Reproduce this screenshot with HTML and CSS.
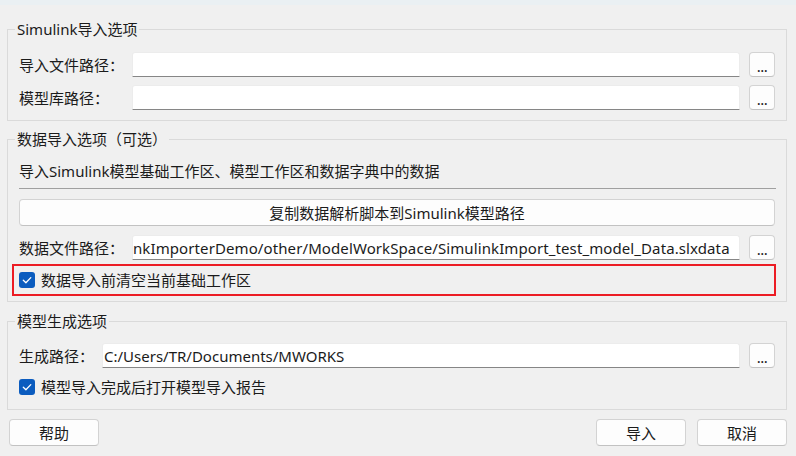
FILE: index.html
```html
<!DOCTYPE html>
<html lang="zh">
<head>
<meta charset="utf-8">
<title>Simulink导入</title>
<link rel="stylesheet" href="styles.css">
</head>
<body>
<div class="topbar"></div>
<div class="main">
  <fieldset class="group g1">
    <legend>Simulink导入选项</legend>
    <div class="row">
      <span class="label lw1">导入文件路径：</span>
      <div class="input"></div>
      <button class="dots">...</button>
    </div>
    <div class="row row-gap">
      <span class="label lw1">模型库路径：</span>
      <div class="input"></div>
      <button class="dots">...</button>
    </div>
  </fieldset>

  <fieldset class="group g2">
    <legend>数据导入选项（可选）</legend>
    <div class="desc">导入Simulink模型基础工作区、模型工作区和数据字典中的数据</div>
    <div class="sep"></div>
    <button class="wide">复制数据解析脚本到Simulink模型路径</button>
    <div class="row data-row">
      <span class="label lw1">数据文件路径：</span>
      <div class="input"><span class="val path">nkImporterDemo/other/ModelWorkSpace/SimulinkImport_test_model_Data.slxdata</span></div>
      <button class="dots">...</button>
    </div>
    <div class="highlight">
      <label class="check">
        <span class="box"><svg viewBox="0 0 16 16" width="16" height="16"><path d="M4.3 8.3 L6.9 10.8 L11.8 5.6" fill="none" stroke="#fff" stroke-width="1.3" stroke-linecap="round" stroke-linejoin="round"/></svg></span>
        <span>数据导入前清空当前基础工作区</span>
      </label>
    </div>
  </fieldset>

  <fieldset class="group g3">
    <legend>模型生成选项</legend>
    <div class="row">
      <span class="label lw3">生成路径：</span>
      <div class="input"><span class="val">C:/Users/TR/Documents/MWORKS</span></div>
      <button class="dots">...</button>
    </div>
    <label class="check check-row">
      <span class="box"><svg viewBox="0 0 16 16" width="16" height="16"><path d="M4.3 8.3 L6.9 10.8 L11.8 5.6" fill="none" stroke="#fff" stroke-width="1.3" stroke-linecap="round" stroke-linejoin="round"/></svg></span>
      <span>模型导入完成后打开模型导入报告</span>
    </label>
  </fieldset>

  <div class="footer">
    <button class="btn">帮助</button>
    <div class="spacer"></div>
    <button class="btn">导入</button>
    <button class="btn">取消</button>
  </div>
</div>
</body>
</html>
```

FILE: styles.css
```css
* { box-sizing: border-box; }
html, body { margin: 0; padding: 0; }
body {
  width: 796px;
  height: 456px;
  overflow: hidden;
  background: #f0f0f0;
  color: #1b1b1b;
  font-family: "Noto Sans", "Noto Sans CJK SC", sans-serif;
  font-size: 15px;
  line-height: 20px;
}
.topbar {
  height: 5px;
  background: #eaf0f3;
}
.main {
  padding: 14px 0 0 7px;
}
.group {
  width: 780px;
  margin: 0;
  padding: 0 11px;
  border: 1px solid #dadada;
  min-inline-size: 0;
}
.group legend {
  padding: 0 2px;
  margin-left: -4px;
  line-height: 20px;
}
.g1 { padding-top: 13px; padding-bottom: 10px; }
.g2 { margin-top: 8px; padding-top: 12px; padding-bottom: 5px; }
.g3 { margin-top: 9px; padding-top: 12px; padding-bottom: 12px; }

.row {
  display: flex;
  align-items: center;
  height: 25px;
}
.row-gap { margin-top: 8px; }
.label { flex: none; white-space: nowrap; }
.lw1 { width: 113px; }
.lw3 { width: 83px; }
.input {
  flex: 1;
  min-width: 0;
  height: 25px;
  background: #fff;
  border: 1px solid #ececec;
  border-bottom: 1px solid #868686;
  border-radius: 3px 3px 0 0;
  white-space: nowrap;
  display: flex;
  align-items: center;
}
.input .val { padding-left: 1px; }
.input .path { padding-left: 0; letter-spacing: 0.1px; }
button {
  font: inherit;
  color: #1b1b1b;
  background: #fdfdfd;
  border: 1px solid #d3d3d3;
  border-bottom-color: #c2c2c2;
  border-radius: 4px;
  padding: 0;
  margin: 0;
}
.dots {
  flex: none;
  width: 26px;
  height: 25px;
  margin-left: 9px;
  line-height: 16px;
  font-size: 15px;
  letter-spacing: -0.5px;
  padding-top: 2px;
}
.desc { height: 20px; }
.sep {
  height: 1px;
  margin: 7px -1px 0 0;
  background: #a0a0a0;
}
.wide {
  display: block;
  width: 100%;
  height: 27px;
  margin-top: 10px;
}
.data-row { margin-top: 9px; }
.highlight {
  margin: 4px -1px 0 -7px;
  height: 32px;
  border: 2px solid #ec1c24;
  display: flex;
  align-items: center;
  padding-left: 5px;
}
.check {
  display: flex;
  align-items: center;
  gap: 6px;
}
.check-row { margin-top: 9px; height: 20px; }
.box {
  width: 16px;
  height: 16px;
  border-radius: 3px;
  background: #0b5cbf;
  display: flex;
}
.footer {
  display: flex;
  margin-top: 9px;
  padding-left: 2px;
  width: 780px;
}
.spacer { flex: 1; }
.btn {
  width: 90px;
  height: 27px;
}
.btn + .btn { margin-left: 11px; }
```
